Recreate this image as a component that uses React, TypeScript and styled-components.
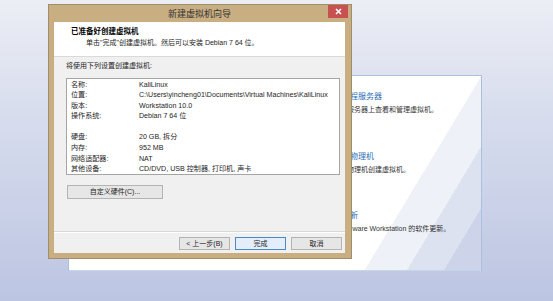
import styled, { createGlobalStyle } from 'styled-components';

const GlobalStyle = createGlobalStyle`
  html, body {
    margin: 0;
    padding: 0;
  }
  body {
    font-family: 'Liberation Sans', 'Noto Sans CJK SC', sans-serif;
    color: #1e1e1e;
  }
`;

interface ISummaryRow {
  label: string;
  value: string;
}

const SUMMARY: ISummaryRow[] = [
  { label: '名称:', value: 'KaliLinux' },
  { label: '位置:', value: 'C:\\Users\\yincheng01\\Documents\\Virtual Machines\\KaliLinux' },
  { label: '版本:', value: 'Workstation 10.0' },
  { label: '操作系统:', value: 'Debian 7 64 位' },
  { label: '', value: '' },
  { label: '硬盘:', value: '20 GB, 拆分' },
  { label: '内存:', value: '952 MB' },
  { label: '网络适配器:', value: 'NAT' },
  { label: '其他设备:', value: 'CD/DVD, USB 控制器, 打印机, 声卡' },
];

const HOME_ACTIONS = [
  { title: '连接远程服务器', desc: '在远程服务器上查看和管理虚拟机。' },
  { title: '虚拟化物理机', desc: '从现有物理机创建虚拟机。' },
  { title: '软件更新', desc: '检查 VMware Workstation 的软件更新。' },
];

const Desktop = styled.div`
  position: relative;
  width: 553px;
  height: 301px;
  box-sizing: border-box;
  padding: 75px 0 0 68px;
  overflow: hidden;
  background: linear-gradient(180deg, #eceef5 0%, #d9deee 35%, #bcc5e2 100%);
`;

const HomePanel = styled.div`
  width: 414px;
  height: 196px;
  box-sizing: border-box;
  border: 1px solid #a9c1dd;
  display: flex;
  flex-direction: column;
  background: linear-gradient(
    121deg,
    #ffffff 0%,
    #ffffff 78%,
    #eef1f8 78%,
    #eef1f8 86%,
    #dde2f0 86%,
    #dde2f0 93%,
    #cdd4e9 93%,
    #cdd4e9 100%
  );
`;

const ActionList = styled.div`
  flex: 1;
  display: flex;
  flex-direction: column;
  padding: 15px 0 0 257px;
`;

const Action = styled.div`
  height: 59.5px;
`;

const ActionTitle = styled.div`
  font-size: 8px;
  line-height: 11px;
  color: #2f6cb4;
  white-space: nowrap;
`;

const ActionDesc = styled.div`
  margin-top: 2px;
  font-size: 7px;
  line-height: 11px;
  color: #333;
  white-space: nowrap;
`;

const PanelFooter = styled.div`
  height: 29px;
  background: rgba(255, 255, 255, 0.35);
`;

const Dialog = styled.div`
  position: absolute;
  left: 48px;
  top: 4px;
  width: 304px;
  height: 255px;
  box-sizing: border-box;
  border: 1px solid #a08d6c;
  background: #c9ae82;
  padding: 0 6px 5px 5px;
  display: flex;
  flex-direction: column;
`;

const TitleBar = styled.div`
  height: 17px;
  display: grid;
  grid-template-columns: 1fr auto 1fr;
  align-items: center;
`;

const TitleText = styled.div`
  grid-column: 2;
  font-size: 9px;
  color: #333;
  white-space: nowrap;
`;

const CloseButton = styled.div`
  grid-column: 3;
  justify-self: end;
  align-self: start;
  margin-right: -3px;
  width: 20px;
  height: 13px;
  background: #c75050;
  display: flex;
  align-items: center;
  justify-content: center;
`;

const Content = styled.div`
  flex: 1;
  display: flex;
  flex-direction: column;
  background: #f0f0f0;
`;

const Header = styled.div`
  height: 35px;
  box-sizing: border-box;
  background: #ffffff;
  border-bottom: 1px solid #d9d9d9;
  padding: 5px 0 0 17px;
`;

const HeaderTitle = styled.div`
  font-size: 7.5px;
  font-weight: bold;
  line-height: 10px;
  color: #000;
`;

const HeaderSub = styled.div`
  font-size: 7px;
  line-height: 10px;
  margin-left: 15px;
  margin-top: 1px;
  color: #1e1e1e;
`;

const Body = styled.div`
  flex: 1;
  padding: 4px 5px 0 12px;
  display: flex;
  flex-direction: column;
  align-items: flex-start;
`;

const BodyLabel = styled.div`
  font-size: 7px;
  line-height: 10px;
`;

const SummaryBox = styled.div`
  margin-top: 7px;
  align-self: stretch;
  height: 97px;
  box-sizing: border-box;
  border: 1px solid #a5a5a5;
  background: #ffffff;
  padding: 0.5px 0 0 4px;
`;

const SummaryRow = styled.div`
  display: grid;
  grid-template-columns: 68px 1fr;
  height: 10.6px;
  font-size: 7.1px;
  line-height: 10.6px;
  white-space: nowrap;
`;

const Button = styled.div<{ $primary?: boolean; $width: number }>`
  width: ${(p) => p.$width}px;
  height: 13px;
  box-sizing: border-box;
  border: 1px solid ${(p) => (p.$primary ? '#4a8ac4' : '#b4b4b4')};
  background: ${(p) => (p.$primary ? '#e3eefa' : '#e6e6e6')};
  font-size: 7px;
  line-height: 11px;
  text-align: center;
  white-space: nowrap;
  color: #1e1e1e;
`;

const HardwareButton = styled(Button)`
  margin: 10px 0 0 1px;
  height: 14px;
  line-height: 12px;
`;

const Footer = styled.div`
  height: 22px;
  box-sizing: border-box;
  border-top: 1px solid #d8d8d8;
  box-shadow: inset 0 1px 0 #ffffff;
  display: flex;
  justify-content: flex-end;
  gap: 5px;
  padding: 5px 3px 0 0;
`;

const App = () => {
  return (
    <>
      <GlobalStyle />
      <Desktop>
        <HomePanel>
          <ActionList>
            {HOME_ACTIONS.map((a) => (
              <Action key={a.title}>
                <ActionTitle>{a.title}</ActionTitle>
                <ActionDesc>{a.desc}</ActionDesc>
              </Action>
            ))}
          </ActionList>
          <PanelFooter />
        </HomePanel>

        <Dialog>
          <TitleBar>
            <TitleText>新建虚拟机向导</TitleText>
            <CloseButton>
              <svg width="7" height="7" viewBox="0 0 7 7">
                <path d="M1 1 L6 6 M6 1 L1 6" stroke="#fff" strokeWidth="1.6" />
              </svg>
            </CloseButton>
          </TitleBar>
          <Content>
            <Header>
              <HeaderTitle>已准备好创建虚拟机</HeaderTitle>
              <HeaderSub>单击"完成"创建虚拟机。然后可以安装 Debian 7 64 位。</HeaderSub>
            </Header>
            <Body>
              <BodyLabel>将使用下列设置创建虚拟机:</BodyLabel>
              <SummaryBox>
                {SUMMARY.map((row, i) => (
                  <SummaryRow key={i}>
                    <span>{row.label}</span>
                    <span>{row.value}</span>
                  </SummaryRow>
                ))}
              </SummaryBox>
              <HardwareButton $width={96}>自定义硬件(C)...</HardwareButton>
            </Body>
            <Footer>
              <Button $width={51}>&lt; 上一步(B)</Button>
              <Button $width={51} $primary>完成</Button>
              <Button $width={51}>取消</Button>
            </Footer>
          </Content>
        </Dialog>
      </Desktop>
    </>
  );
};

export default App;
